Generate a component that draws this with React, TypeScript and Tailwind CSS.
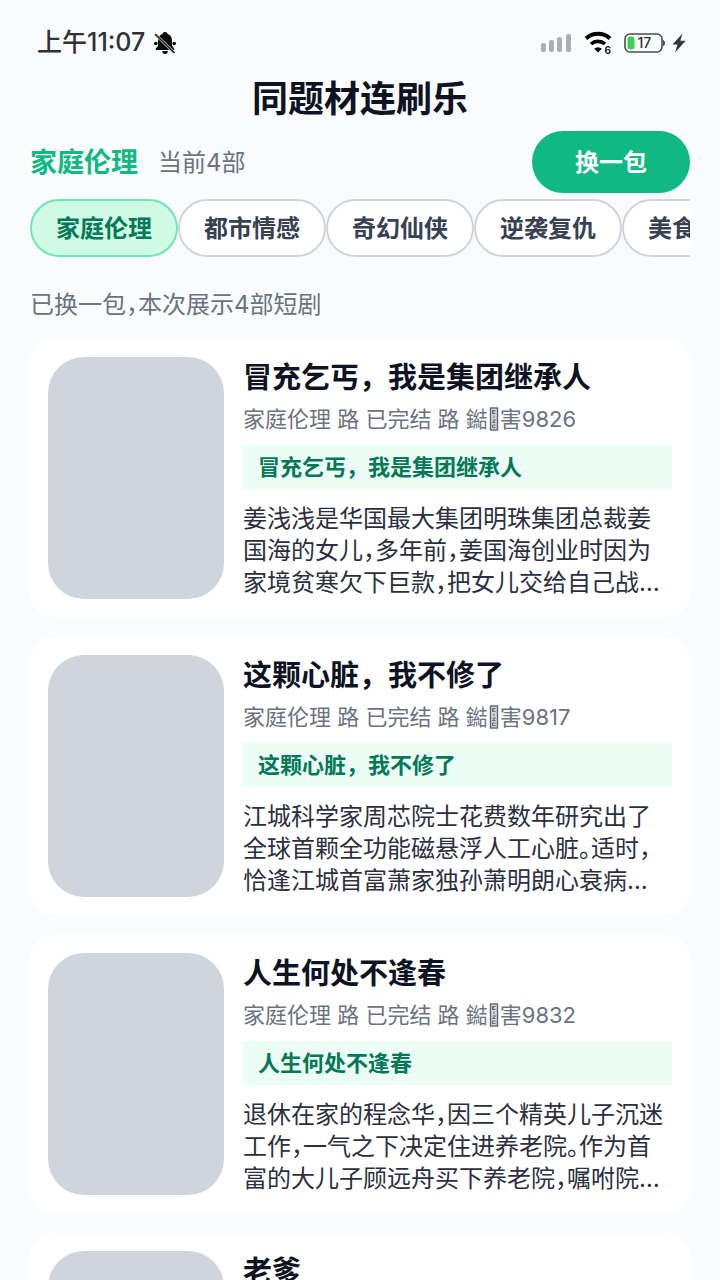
import clsx from 'clsx'

type Drama = {
  title: string
  heat: string
  desc: string
}

const categories: string[] = ['家庭伦理', '都市情感', '奇幻仙侠', '逆袭复仇', '美食人生']

const dramas: Drama[] = [
  {
    title: '冒充乞丐，我是集团继承人',
    heat: '9826',
    desc: '姜浅浅是华国最大集团明珠集团总裁姜国海的女儿，多年前，姜国海创业时因为家境贫寒欠下巨款，把女儿交给自己战…',
  },
  {
    title: '这颗心脏，我不修了',
    heat: '9817',
    desc: '江城科学家周芯院士花费数年研究出了全球首颗全功能磁悬浮人工心脏。适时，恰逢江城首富萧家独孙萧明朗心衰病…',
  },
  {
    title: '人生何处不逢春',
    heat: '9832',
    desc: '退休在家的程念华，因三个精英儿子沉迷工作，一气之下决定住进养老院。作为首富的大儿子顾远舟买下养老院，嘱咐院…',
  },
  {
    title: '老爹',
    heat: '',
    desc: '',
  },
]

const BellOff = () => (
  <svg width="24" height="24" viewBox="0 0 24 24" fill="none" aria-hidden="true">
    <path d="M12 1c1.500 0 2.400.8 2.600 1.900 2.900 1 4.400 3.400 4.400 6.600v5.500l2.200 2.500V19H2.800v-1.500L5 15V9.500c0-3.200 1.500-5.600 4.400-6.600C9.600 1.800 10.500 1 12 1z" fill="#0a0a0a" />
    <path d="M9.200 20h5.600c0 2-1 3-2.800 3s-2.800-1-2.800-3z" fill="#0a0a0a" />
    <circle cx="2.800" cy="12.500" r="1.800" fill="#0a0a0a" />
    <circle cx="21.200" cy="12.500" r="1.800" fill="#0a0a0a" />
    <path d="M2.500 3.500l18.500 18" stroke="#c9cacc" strokeWidth="3" />
    <path d="M2 3l19.500 19" stroke="#222" strokeWidth="1.600" />
  </svg>
)

const Signal = () => (
  <svg width="31" height="20" viewBox="0 0 31 20" fill="#acaeb1" aria-hidden="true">
    <rect x="0" y="10" width="5" height="9" rx="2" />
    <rect x="8" y="7" width="5" height="12" rx="2" />
    <rect x="16" y="4" width="5" height="15" rx="2" />
    <rect x="25" y="1" width="5" height="18" rx="2" />
  </svg>
)

const Wifi = () => (
  <svg width="30" height="24" viewBox="0 0 30 24" fill="none" aria-hidden="true">
    <path d="M2 7.500a17.500 17.500 0 0 1 24 0" stroke="#000" strokeWidth="4" />
    <path d="M7 13a10.500 10.500 0 0 1 14 0" stroke="#000" strokeWidth="3.600" />
    <path d="M14 21.500l-3.800-3.800a5.400 5.400 0 0 1 7.600 0z" fill="#000" />
    <text x="20.500" y="23" fontSize="10" fontWeight="700" fontFamily="Inter, sans-serif" fill="#222">6</text>
  </svg>
)

const Battery = () => (
  <svg width="42" height="20" viewBox="0 0 42 20" fill="none" aria-hidden="true">
    <rect x="1" y="1" width="37" height="18" rx="5" stroke="#4a4c50" strokeWidth="1.600" />
    <path d="M39.500 7.500c1.400.5 1.400 4.500 0 5z" fill="#4a4c50" stroke="#4a4c50" />
    <rect x="3.500" y="3.500" width="7" height="13" rx="3" fill="#3ccf57" />
    <text x="13.500" y="15.200" fontSize="14" fontWeight="500" fontFamily="Inter, sans-serif" fill="#333">17</text>
  </svg>
)

const Bolt = () => (
  <svg width="14" height="20" viewBox="0 0 14 20" fill="#333539" aria-hidden="true">
    <path d="M10.500 0.500L0.500 11.500h5L3.200 19.500 13.600 7.800H8.300z" />
  </svg>
)

// box a phone draws for a code point that has no glyph
const MissingGlyph = () => (
  <svg className="inline-block align-[-4px] mx-px" width="10" height="24" viewBox="0 0 10 24" fill="none" aria-hidden="true">
    <rect x="1.500" y="1" width="7" height="22" fill="#d5d7dc" stroke="#5f6672" strokeWidth="1.400" />
    <path d="M6.500 3.500h-3v3h3M3.500 5h2M5 8.500v2.500M3.500 13h3l-3 2.500h3M6.500 18h-3v2.500h3" stroke="#5f6672" />
  </svg>
)

const StatusBar = () => {
  return (
    <div className="h-[76px] pt-2.5 pl-[37px] pr-[34px] flex items-center justify-between">
      <div className="flex items-center gap-2 text-[25px] font-medium text-[#2f3134]">
        <span>上午11:07</span>
        <BellOff />
      </div>
      <div className="flex items-center">
        <Signal />
        <span className="ml-3"><Wifi /></span>
        <span className="ml-2.5"><Battery /></span>
        <span className="ml-1.5"><Bolt /></span>
      </div>
    </div>
  )
}

const DramaCard = ({ title, heat, desc }: Drama) => {
  return (
    <article className="bg-white rounded-3xl p-[18px] flex gap-[19px]">
      <div className="w-44 h-[242px] shrink-0 rounded-[36px] bg-[#d0d4dd]"></div>
      <div className="min-w-0 flex-1">
        <h2 className="text-[29px] leading-[42px] font-bold text-[#0d1322]">{title}</h2>
        <p className="mt-1 text-[22px] leading-8 text-[#6b7280] whitespace-nowrap">
          家庭伦理 路 已完结 路 鐑<MissingGlyph />害{heat}
        </p>
        <p className="mt-2.5 px-[15px] text-[22px] leading-11 font-bold text-[#047857] bg-[#ecfdf5]">{title}</p>
        <p className="mt-3.5 text-2xl leading-8 text-[#2b3040] line-clamp-3 [font-feature-settings:'halt']">{desc}</p>
      </div>
    </article>
  )
}

const App = () => {
  return (
    <div lang="zh-CN" className="h-screen overflow-y-auto [scrollbar-width:none] bg-[#fafbfd] font-[Inter,'Noto_Sans_CJK_SC',sans-serif]">
      <StatusBar />
      <main className="px-[30px]">
        <h1 className="text-center text-4xl leading-[46px] font-bold text-[#0d1322]">同题材连刷乐</h1>
        <div className="mt-[9px] flex items-center justify-between">
          <div className="flex items-center gap-5 pt-0.5">
            <span className="text-[27px] font-bold text-[#10b981]">家庭伦理</span>
            <span className="text-2xl text-[#6b7280]">当前4部</span>
          </div>
          <button className="h-[62px] px-[43px] pt-0.5 rounded-full bg-[#10b981] text-2xl font-bold text-white">换一包</button>
        </div>
        <div className="mt-1.5 flex overflow-x-auto [scrollbar-width:none]">
          {categories.map((item, index) => (
            <button
              key={item}
              className={clsx(
                'h-[58px] px-6 pt-0.5 shrink-0 rounded-full border-2 text-2xl font-bold',
                index === 0 ? 'border-[#6ee7b7] bg-[#d1fae5] text-[#047857]' : 'border-[#d1d5db] bg-white text-[#374151]'
              )}
            >
              {item}
            </button>
          ))}
        </div>
        <p className="mt-8 text-2xl leading-8 text-[#6b7280] [font-feature-settings:'halt']">已换一包，本次展示4部短剧</p>
        <div className="mt-[18px] flex flex-col gap-5">
          {dramas.map((item) => (
            <DramaCard key={item.title} {...item} />
          ))}
        </div>
      </main>
    </div>
  )
}

export default App
